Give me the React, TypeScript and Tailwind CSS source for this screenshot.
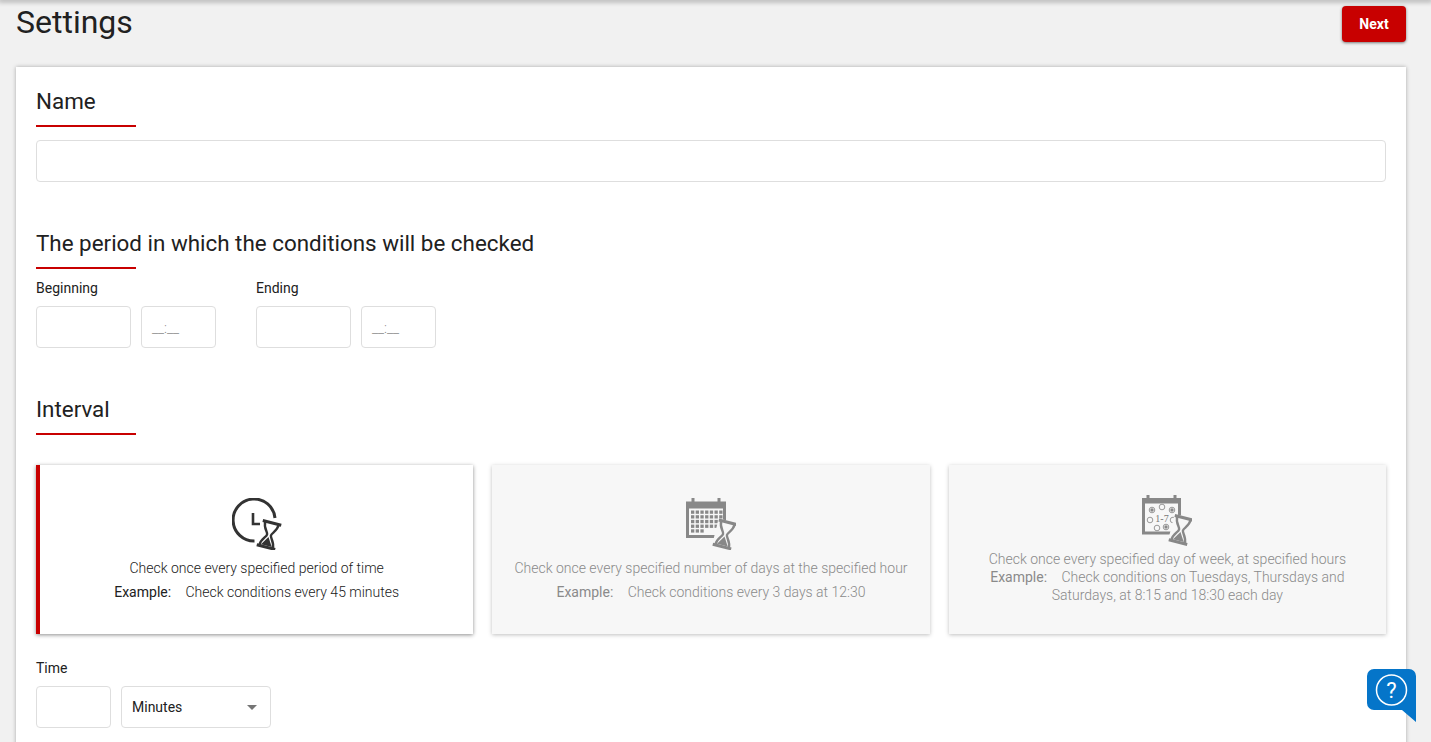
import { ReactNode } from "react";

function Hourglass({ x, y, color, bg }: { x: number; y: number; color: string; bg: string }) {
  return (
    <g transform={`translate(${x} ${y}) rotate(14)`} fill="none" stroke={color}>
      <path d="M-10 -14H10V14H-10Z" fill={bg} stroke="none" />
      <path d="M-9.500 -12.500H9.500M-9.500 12.500H9.500" strokeWidth="3" />
      <path d="M-7 -12.500C-7 -5 -2 -3 -2 0C-2 3 -7 5 -7 12.500M7 -12.500C7 -5 2 -3 2 0C2 3 7 5 7 12.500" strokeWidth="2.400" />
      <path d="M0 2L-5.500 11H5.500Z" fill={color} stroke="none" />
    </g>
  );
}

function ClockIcon() {
  return (
    <svg width="50" height="52" viewBox="0 0 50 52">
      <path d="M22.500 43A21 21 0 1 1 43 20" fill="none" stroke="#333" strokeWidth="3" />
      <path d="M21 15V26H28" fill="none" stroke="#333" strokeWidth="2.600" />
      <Hourglass x={37} y={37} color="#333" bg="white" />
    </svg>
  );
}

function CalendarIcon() {
  const rows = [0, 1, 2, 3, 4];
  const cols = [0, 1, 2, 3, 4, 5, 6];
  return (
    <svg width="50" height="52" viewBox="0 0 50 52">
      <path d="M1.500 5H38.500V38.500H1.500Z" fill="#f7f7f7" stroke="#888" strokeWidth="3" />
      <path d="M0 4H40V10.500H0Z" fill="#888" />
      <path d="M7 0V7M33 0V7" stroke="#888" strokeWidth="3" />
      {rows.map((r) =>
        cols.map((c) =>
          r === 4 && c > 2 ? null : (
            <rect key={`${r}-${c}`} x={5 + c * 4.700} y={12.500 + r * 4.700} width="3.300" height="3.300" fill="#888" />
          ),
        ),
      )}
      <Hourglass x={39} y={36.500} color="#888" bg="#f7f7f7" />
    </svg>
  );
}

function WeekIcon() {
  const open = [
    [20, 12],
    [8, 25],
    [31, 25],
    [15, 33],
  ];
  const full = [
    [10, 15],
    [30, 15],
    [24, 32],
  ];
  return (
    <svg width="50" height="52" viewBox="0 0 50 52">
      <path d="M1.500 5H37.500V38H1.500Z" fill="#f7f7f7" stroke="#888" strokeWidth="3" />
      <path d="M0 3H39V8.500H0Z" fill="#888" />
      <path d="M6 0V6M33 0V6" stroke="#888" strokeWidth="3" />
      <g fill="none" stroke="#999" strokeWidth="1">
        {open.map(([cx, cy]) => (
          <circle key={`${cx}-${cy}`} cx={cx} cy={cy} r="2.800" />
        ))}
        {full.map(([cx, cy]) => (
          <circle key={`${cx}-${cy}`} cx={cx} cy={cy} r="2.800" />
        ))}
      </g>
      <g fill="#888">
        {full.map(([cx, cy]) => (
          <circle key={`${cx}-${cy}`} cx={cx} cy={cy} r="1.700" />
        ))}
      </g>
      <text x="20" y="27" textAnchor="middle" fontSize="10" fontFamily="'Liberation Serif', serif" fill="#777">
        1-7
      </text>
      <Hourglass x={39} y={35} color="#888" bg="#f7f7f7" />
    </svg>
  );
}

function SectionTitle({ children, className }: { children: ReactNode; className: string }) {
  return (
    <div className={className}>
      <h2 className="text-[22.400px] leading-[26px] text-[#212121]">{children}</h2>
      <div className="mt-[11px] h-[2px] w-[100px] bg-[#c80000]" />
    </div>
  );
}

function Field({ className }: { className: string }) {
  return <div className={`h-[42px] rounded-[4px] border border-[#dedede] bg-white ${className}`} />;
}

function TimeField() {
  return (
    <div className="flex h-[42px] w-[75px] items-center rounded-[4px] border border-[#dedede] bg-white pl-[10px] pt-[3px] text-[14px] font-light text-[#8a8a8a]">
      __:__
    </div>
  );
}

function DateTime({ label, className }: { label: string; className: string }) {
  return (
    <div className={className}>
      <div className="text-[14px] leading-[20px] text-[#212121]">{label}</div>
      <div className="mt-[8px] flex gap-[10px]">
        <Field className="w-[95px]" />
        <TimeField />
      </div>
    </div>
  );
}

type IntervalCardProps = {
  icon: ReactNode;
  active?: boolean;
  narrow?: boolean;
  textGap: string;
  exampleGap: string;
  title: string;
  example: string;
};

function IntervalCard({ icon, active, narrow, textGap, exampleGap, title, example }: IntervalCardProps) {
  return (
    <div
      className={
        active
          ? "flex h-[169px] flex-col items-center justify-center border-l-4 border-[#c80000] bg-white text-center text-[14px] leading-[18px] font-light text-[#212121] shadow-[0_1px_4px_rgba(0,0,0,0.45)]"
          : "flex h-[169px] flex-col items-center justify-center bg-[#f7f7f7] text-center text-[14px] leading-[18px] font-light text-[#8a8a8a] shadow-[0_1px_4px_rgba(0,0,0,0.25)]"
      }
    >
      {icon}
      <div className={narrow ? "px-[30px]" : "px-[10px]"}>
        <p className={textGap}>{title}</p>
        <p className={exampleGap}>
          <span className="mr-[11px] font-normal">Example:</span> {example}
        </p>
      </div>
    </div>
  );
}

export default function App() {
  return (
    <div className="relative h-[742px] overflow-hidden bg-[#f1f1f1] font-['Roboto',sans-serif]">
      {/* sombra superior */}
      <div className="h-0 shadow-[0_0_5px_2px_rgba(0,0,0,0.3)]" />

      {/* Cabecera */}
      <div className="flex h-[67px] items-start justify-between pr-[25px] pl-[16px]">
        <h1 className="mt-[3px] text-[32px] leading-[38px] text-[#212121]">Settings</h1>
        <button className="mt-[6px] h-[36px] w-[64px] rounded-[4px] bg-[#c80000] text-[14px] font-bold text-white shadow-[0_1px_3px_rgba(0,0,0,0.5)]">
          Next
        </button>
      </div>

      {/* Formulario */}
      <div className="mr-[25px] ml-[16px] h-[700px] bg-white pt-[21px] pr-[19px] pl-[20px] shadow-[0_0_4px_rgba(0,0,0,0.3)]">
        <SectionTitle className="">Name</SectionTitle>
        <Field className="mt-[13px] w-[1350px]" />

        <SectionTitle className="mt-[48px]">The period in which the conditions will be checked</SectionTitle>
        <div className="mt-[9px] flex gap-[40px]">
          <DateTime label="Beginning" className="" />
          <DateTime label="Ending" className="" />
        </div>

        <SectionTitle className="mt-[48px]">Interval</SectionTitle>
        <div className="mt-[30px] grid w-[1350px] grid-cols-3 gap-[19px]">
          <IntervalCard
            active
            icon={<ClockIcon />}
            textGap="mt-[9px]"
            exampleGap="mt-[6px]"
            title="Check once every specified period of time"
            example="Check conditions every 45 minutes"
          />
          <IntervalCard
            icon={<CalendarIcon />}
            textGap="mt-[9px]"
            exampleGap="mt-[6px]"
            title="Check once every specified number of days at the specified hour"
            example="Check conditions every 3 days at 12:30"
          />
          <IntervalCard
            narrow
            icon={<WeekIcon />}
            textGap="mt-[3px]"
            exampleGap=""
            title="Check once every specified day of week, at specified hours"
            example="Check conditions on Tuesdays, Thursdays and Saturdays, at 8:15 and 18:30 each day"
          />
        </div>

        <div className="mt-[24px] text-[14px] leading-[20px] text-[#212121]">Time</div>
        <div className="mt-[8px] flex gap-[10px]">
          <Field className="w-[75px]" />
          <div className="flex h-[42px] w-[150px] items-center justify-between rounded-[4px] border border-[#dedede] bg-white pr-[13px] pl-[10px] text-[14px] text-[#212121]">
            Minutes
            <span className="h-0 w-0 border-x-[5px] border-t-[5px] border-x-transparent border-t-[#757575]" />
          </div>
        </div>
      </div>

      {/* Ayuda */}
      <svg className="absolute top-[669px] left-[1367px]" width="49" height="54" viewBox="0 0 49 54">
        <path d="M7 0H42A7 7 0 0 1 49 7V53L35 41H7A7 7 0 0 1 0 34V7A7 7 0 0 1 7 0Z" fill="#0575c9" />
        <circle cx="24.500" cy="21" r="15" fill="none" stroke="white" strokeWidth="1.500" />
        <text x="24.500" y="29" textAnchor="middle" fontSize="22" fontFamily="Roboto, sans-serif" fill="white">
          ?
        </text>
      </svg>
    </div>
  );
}
